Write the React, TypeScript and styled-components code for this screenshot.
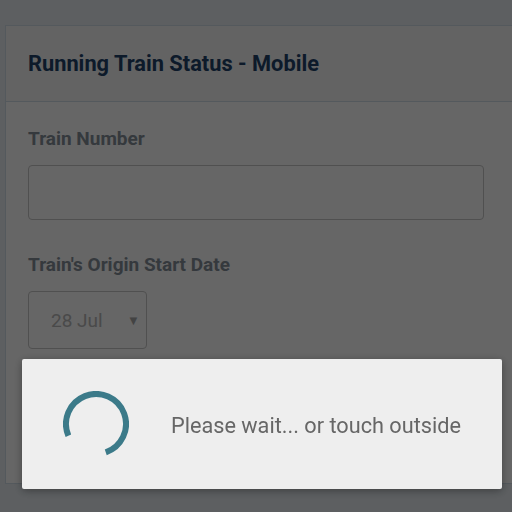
import React from "react";
import styled, { createGlobalStyle } from "styled-components";

const Global = createGlobalStyle`
  html, body { margin: 0; padding: 0; }
  body {
    width: 512px;
    height: 512px;
    overflow: hidden;
    background: #e8eef3;
    font-family: Roboto, "Noto Sans", "Liberation Sans", sans-serif;
  }
`;

const Page = styled.div`
  padding: 25px 0 0 5px;
  height: 512px;
  box-sizing: border-box;
`;

const Card = styled.div`
  width: 520px;
  height: 459px;
  box-sizing: border-box;
  background: #ffffff;
  border: 1px solid #d2dfe9;
  display: flex;
  flex-direction: column;
`;

const Header = styled.div`
  height: 76px;
  box-sizing: border-box;
  display: flex;
  align-items: center;
  padding-left: 22px;
  background: #f7f7f7;
  border-bottom: 1px solid #d2dfe9;
`;

const Title = styled.h1`
  margin: 0;
  font-size: 21.8px;
  font-weight: 700;
  color: #21436a;
`;

const Body = styled.div`
  padding: 26px 0 0 22px;
  display: flex;
  flex-direction: column;
`;

const Label = styled.label`
  font-size: 19px;
  font-weight: 700;
  color: #858f9a;
  line-height: 22px;
  margin-bottom: 15px;
`;

const Input = styled.div`
  width: 456px;
  height: 55px;
  box-sizing: border-box;
  border: 1px solid #c7c7c7;
  border-radius: 4px;
  background: #ffffff;
  margin-bottom: 34px;
`;

const Select = styled.div`
  width: 119px;
  height: 58px;
  box-sizing: border-box;
  border: 1px solid #c7c7c7;
  border-radius: 4px;
  display: flex;
  align-items: center;
  padding-left: 22px;
`;

const SelectText = styled.span`
  font-size: 19px;
  color: #b8b8b8;
  width: 76px;
`;

const Arrow = styled.span`
  font-size: 13px;
  color: #a8a8a8;
`;

const Overlay = styled.div`
  position: fixed;
  inset: 0;
  background: rgba(0, 0, 0, 0.6);
`;

const Dialog = styled.div`
  position: fixed;
  left: 22px;
  top: 359px;
  width: 480px;
  height: 130px;
  background: #eeeeee;
  border-radius: 2px;
  box-shadow: 0 2px 8px rgba(0, 0, 0, 0.35);
  display: flex;
  align-items: center;
  padding-left: 41px;
  box-sizing: border-box;
  gap: 42px;
`;

const Message = styled.span`
  font-size: 21.7px;
  color: #666666;
  padding-top: 2px;
`;

function Spinner() {
  const cx = 33, cy = 33, r = 30;
  const a0 = (157 * Math.PI) / 180;
  const a1 = (71 * Math.PI) / 180;
  const x0 = cx + r * Math.cos(a0), y0 = cy + r * Math.sin(a0);
  const x1 = cx + r * Math.cos(a1), y1 = cy + r * Math.sin(a1);
  return (
    <svg width="66" height="66" viewBox="0 0 66 66">
      <path
        d={`M ${x0} ${y0} A ${r} ${r} 0 1 1 ${x1} ${y1}`}
        fill="none"
        stroke="#3b7a89"
        strokeWidth="6"
      />
    </svg>
  );
}

export default function App() {
  return (
    <>
      <Global />
      <Page>
        <Card>
          <Header>
            <Title>Running Train Status - Mobile</Title>
          </Header>
          <Body>
            <Label>Train Number</Label>
            <Input />
            <Label>Train's Origin Start Date</Label>
            <Select>
              <SelectText>28 Jul</SelectText>
              <Arrow>▼</Arrow>
            </Select>
          </Body>
        </Card>
      </Page>
      <Overlay />
      <Dialog>
        <Spinner />
        <Message>Please wait... or touch outside</Message>
      </Dialog>
    </>
  );
}
